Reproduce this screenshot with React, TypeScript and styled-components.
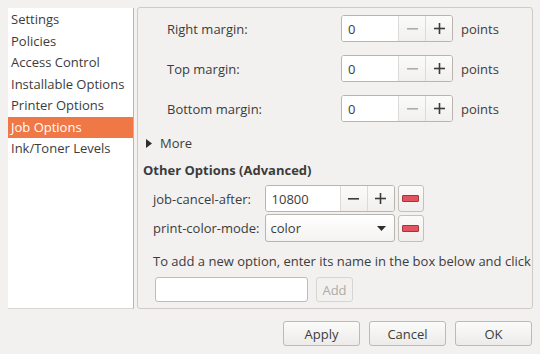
import React from "react";
import styled, { createGlobalStyle } from "styled-components";

const Global = createGlobalStyle`
  html, body { margin: 0; padding: 0; background: #f2f1f0; }
  body { font-family: "Open Sans", "Noto Sans", sans-serif; font-size: 13px; color: #3c3c3c; }
  * { box-sizing: border-box; }
`;

const Window = styled.div`
  width: 540px;
  height: 354px;
  background: #f2f1f0;
  display: flex;
  flex-direction: column;
  overflow: hidden;
`;

const Main = styled.div`
  display: flex;
  align-items: flex-start;
  padding: 7px 7px 0 8px;
  height: 309px;
`;

const Sidebar = styled.ul`
  list-style: none;
  margin: 1px 0 0 0;
  padding: 1px 0 0 0;
  width: 126px;
  height: 301px;
  background: #ffffff;
  border-right: 1px solid #b9b6b1;
  border-bottom: 1px solid #d9d6d2;
`;

const Item = styled.li<{ $selected?: boolean }>`
  height: 21.5px;
  line-height: 21.5px;
  padding-left: 3px;
  white-space: nowrap;
  color: ${(p) => (p.$selected ? "#ffffff" : "#3c3c3c")};
  background: ${(p) => (p.$selected ? "#f07746" : "transparent")};
`;

const Frame = styled.div`
  margin-left: 3px;
  flex: 1;
  height: 302px;
  border: 1px solid #cfccc7;
  border-radius: 3px;
  overflow: hidden;
  padding: 7px 0 0 0;
  display: flex;
  flex-direction: column;
`;

const MarginGrid = styled.div`
  display: grid;
  grid-template-columns: 166px 112px auto;
  justify-content: start;
  column-gap: 8px;
  row-gap: 13px;
  align-items: center;
  padding-left: 29px;
`;

const Label = styled.span`
  white-space: nowrap;
`;

const Spin = styled.div<{ $w: number; $entry: number }>`
  display: flex;
  width: ${(p) => p.$w}px;
  height: 27px;
  border: 1px solid #b8b5b0;
  border-radius: 3px;
  background: #fff;
  overflow: hidden;
  & > input {
    width: ${(p) => p.$entry}px;
  }
`;

const SpinEntry = styled.input`
  border: none;
  outline: none;
  background: #ffffff;
  font: inherit;
  color: #3c3c3c;
  padding: 0 0 0 6px;
  height: 100%;
`;

const SpinBtn = styled.div<{ $off?: boolean }>`
  flex: 1;
  display: flex;
  align-items: center;
  justify-content: center;
  border-left: 1px solid #dcdad6;
  background: linear-gradient(#fbfbfa, #f1f0ee);
  color: ${(p) => (p.$off ? "#b0ada8" : "#3c3c3c")};
`;

const Expander = styled.div`
  display: flex;
  align-items: center;
  gap: 8px;
  margin: 12px 0 0 8px;
  height: 18px;
`;

const Heading = styled.div`
  font-weight: bold;
  margin: 9px 0 0 5px;
  height: 18px;
  line-height: 18px;
`;

const AdvGrid = styled.div`
  display: grid;
  grid-template-columns: auto 130px 26px;
  justify-content: start;
  column-gap: 3px;
  row-gap: 2px;
  align-items: center;
  padding-left: 15px;
  margin-top: 6px;
  & > span {
    padding-right: 2px;
  }
`;

const Combo = styled.div`
  height: 28px;
  border: 1px solid #b8b5b0;
  border-radius: 3px;
  background: linear-gradient(#ffffff, #f4f3f1);
  display: flex;
  align-items: center;
  justify-content: space-between;
  padding: 0 8px 0 5px;
`;

const RemoveBtn = styled.div`
  width: 26px;
  height: 27px;
  border: 1px solid #c4c1bc;
  border-radius: 3px;
  background: linear-gradient(#fbfbfa, #efeeec);
  display: flex;
  align-items: center;
  justify-content: center;
  &::after {
    content: "";
    width: 15px;
    height: 5px;
    background: #e0535f;
    border: 1px solid #a8333d;
    border-radius: 1px;
  }
`;

const Help = styled.div`
  white-space: nowrap;
  margin: 9px 0 0 15px;
  height: 20px;
  line-height: 20px;
`;

const AddRow = styled.div`
  display: flex;
  align-items: center;
  gap: 8px;
  margin: 6px 0 0 17px;
`;

const NameEntry = styled.div`
  width: 153px;
  height: 25px;
  border: 1px solid #bfbcb7;
  border-radius: 3px;
  background: #ffffff;
`;

const AddBtn = styled.div`
  width: 37px;
  height: 25px;
  border: 1px solid #d8d5d1;
  border-radius: 3px;
  color: #aeaba6;
  display: flex;
  align-items: center;
  justify-content: center;
`;

const ButtonBar = styled.div`
  display: flex;
  justify-content: flex-end;
  gap: 9px;
  padding: 12px 8px 0 0;
`;

const Button = styled.div`
  width: 77px;
  height: 25px;
  border: 1px solid #bdbab5;
  border-radius: 3px;
  background: linear-gradient(#fbfbfa, #ecebe9);
  display: flex;
  align-items: center;
  justify-content: center;
`;

const Triangle = () => (
  <svg width="6" height="9" viewBox="0 0 6 9">
    <path d="M0 0 L6 4.5 L0 9 Z" fill="#2e2e2e" />
  </svg>
);

const Arrow = () => (
  <svg width="9" height="5" viewBox="0 0 9 5">
    <path d="M0 0 L9 0 L4.5 5 Z" fill="#2e2e2e" />
  </svg>
);

const Minus = () => (
  <svg width="11" height="11" viewBox="0 0 11 11">
    <rect x="0" y="5" width="11" height="1.6" fill="currentColor" />
  </svg>
);

const Plus = () => (
  <svg width="11" height="11" viewBox="0 0 11 11">
    <rect x="0" y="4.7" width="11" height="1.6" fill="currentColor" />
    <rect x="4.7" y="0" width="1.6" height="11" fill="currentColor" />
  </svg>
);

const items = [
  "Settings",
  "Policies",
  "Access Control",
  "Installable Options",
  "Printer Options",
  "Job Options",
  "Ink/Toner Levels",
];

const margins = ["Right margin:", "Top margin:", "Bottom margin:"];

export default function App() {
  return (
    <Window>
      <Global />
      <Main>
        <Sidebar>
          {items.map((t) => (
            <Item key={t} $selected={t === "Job Options"}>
              {t}
            </Item>
          ))}
        </Sidebar>
        <Frame>
          <MarginGrid>
            {margins.map((m) => (
              <React.Fragment key={m}>
                <Label>{m}</Label>
                <Spin $w={112} $entry={56}>
                  <SpinEntry defaultValue="0" />
                  <SpinBtn $off>
                    <Minus />
                  </SpinBtn>
                  <SpinBtn>
                    <Plus />
                  </SpinBtn>
                </Spin>
                <Label>points</Label>
              </React.Fragment>
            ))}
          </MarginGrid>
          <Expander>
            <Triangle />
            <span>More</span>
          </Expander>
          <Heading>Other Options (Advanced)</Heading>
          <AdvGrid>
            <Label>job-cancel-after:</Label>
            <Spin $w={130} $entry={74}>
              <SpinEntry defaultValue="10800" />
              <SpinBtn>
                <Minus />
              </SpinBtn>
              <SpinBtn>
                <Plus />
              </SpinBtn>
            </Spin>
            <RemoveBtn />
            <Label>print-color-mode:</Label>
            <Combo>
              <span>color</span>
              <Arrow />
            </Combo>
            <RemoveBtn />
          </AdvGrid>
          <Help>
            To add a new option, enter its name in the box below and click to add.
          </Help>
          <AddRow>
            <NameEntry />
            <AddBtn>Add</AddBtn>
          </AddRow>
        </Frame>
      </Main>
      <ButtonBar>
        <Button>Apply</Button>
        <Button>Cancel</Button>
        <Button>OK</Button>
      </ButtonBar>
    </Window>
  );
}
